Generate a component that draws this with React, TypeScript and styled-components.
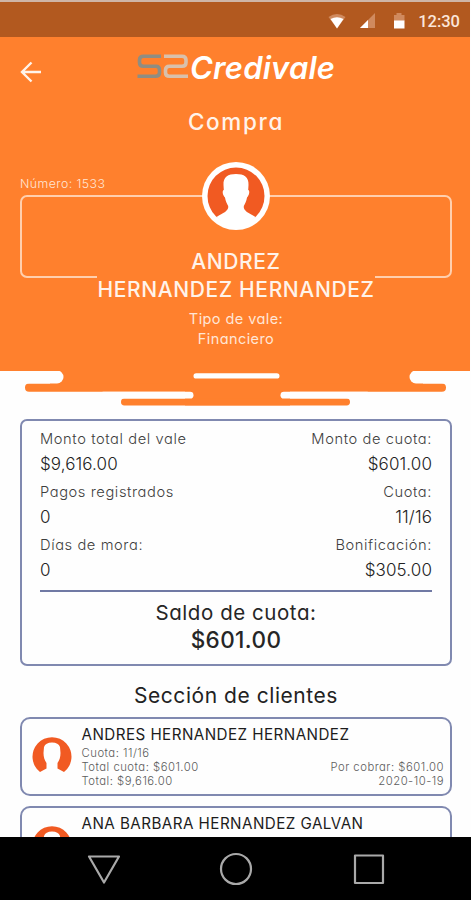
import React from "react";
import styled, { createGlobalStyle } from "styled-components";

const ORANGE = "#ff802d";
const FLAME = "#f15a22";
const NAVY = "#8089b0";

const GlobalStyle = createGlobalStyle`
  * { box-sizing: border-box; }
  body {
    margin: 0;
    background: #fff;
    font-family: "Inter", sans-serif;
    font-feature-settings: "cv11" 1;
  }
`;

const Screen = styled.div`
  display: flex;
  flex-direction: column;
  width: 471px;
  height: 900px;
  overflow: hidden;
  background: #fefefe;
`;

const StatusBar = styled.div`
  display: flex;
  flex: none;
  align-items: center;
  justify-content: flex-end;
  width: 470px;
  height: 37px;
  padding: 5px 10px 0 0;
  border-top: 2px solid #cfb5a6;
  background: #b2591f;
`;

const StatusIcons = styled.svg`
  display: block;
  margin-right: 10px;
`;

const Clock = styled.span`
  font: 500 16.5px/20px Roboto, sans-serif;
  color: #fbe6da;
`;

const Header = styled.header`
  flex: none;
  width: 470px;
  height: 334px;
  padding: 0 18px 0 20px;
  background: ${ORANGE};
`;

const TopBar = styled.div`
  display: grid;
  grid-template-columns: 117px 1fr;
  align-items: center;
  height: 66px;
`;

const BackIcon = styled.svg`
  display: block;
  margin-top: 3px;
`;

const Brand = styled.div`
  display: flex;
  align-items: flex-start;
`;

const BrandLogo = styled.svg`
  display: block;
`;

const BrandName = styled.span`
  margin-left: 1px;
  font-size: 31px;
  line-height: 38px;
  margin-top: -5px;
  font-weight: 600;
  font-style: italic;
  letter-spacing: 0.2px;
  color: #fff;
`;

const Title = styled.h1`
  margin: 3px 0 0;
  text-align: center;
  font-size: 22.5px;
  line-height: 31px;
  font-weight: 500;
  letter-spacing: 1.65px;
  color: #fff3ea;
`;

const VoucherNumber = styled.div`
  margin-top: 39px;
  height: 19px;
  font-size: 12.3px;
  line-height: 16px;
  font-weight: 300;
  letter-spacing: 0.45px;
  color: #ffe6d6;
`;

const HolderFrame = styled.section`
  display: flex;
  flex-direction: column;
  align-items: center;
  height: 83px;
  border: 2px solid #ffcfae;
  border-radius: 7px;
`;

const HolderAvatar = styled.svg`
  display: block;
  flex: none;
  margin-top: -35px;
`;

const HolderName = styled.div`
  flex: none;
  width: 278px;
  margin-top: 18px;
  background: ${ORANGE};
  text-align: center;
  white-space: nowrap;
  font-size: 21px;
  line-height: 28px;
  font-weight: 500;
  letter-spacing: 0.62px;
  color: #fff3ea;
`;

const VoucherType = styled.div`
  margin-top: 31px;
  text-align: center;
  font-size: 14.5px;
  line-height: 19.5px;
  font-weight: 400;
  letter-spacing: 0.42px;
  color: #ffe6d6;
`;

const Drips = styled.svg`
  display: block;
  flex: none;
`;

const Body = styled.main`
  display: flex;
  flex: 1;
  flex-direction: column;
  min-height: 0;
  overflow: hidden;
  padding: 13px 19px 0 20px;
`;

const Summary = styled.section`
  flex: none;
  height: 247px;
  padding: 5px 18px 0;
  border: 2px solid ${NAVY};
  border-radius: 7px;
`;

const Figures = styled.dl`
  display: grid;
  grid-template-columns: auto auto;
  justify-content: space-between;
  row-gap: 3px;
  margin: 0;
`;

const Figure = styled.div<{ $end?: boolean }>`
  text-align: ${(p) => (p.$end ? "right" : "left")};
`;

const FigureLabel = styled.dt`
  font-size: 14.7px;
  line-height: 26px;
  font-weight: 300;
  letter-spacing: 0.58px;
  color: #3e3e3e;
`;

const FigureValue = styled.dd`
  margin: 0;
  font-size: 17px;
  line-height: 24px;
  font-weight: 300;
  letter-spacing: 0.1px;
  color: #222;
`;

const Rule = styled.hr`
  height: 2px;
  margin: 8px 0 7px;
  border: 0;
  background: #7079a4;
`;

const BalanceLabel = styled.div`
  text-align: center;
  font-size: 20.5px;
  line-height: 27px;
  letter-spacing: 0.55px;
  color: #262626;
`;

const BalanceValue = styled.div`
  text-align: center;
  font-size: 22.5px;
  line-height: 27px;
  font-weight: 500;
  letter-spacing: 0.4px;
  color: #262626;
`;

const SectionTitle = styled.h2`
  margin: 16px 0 7px;
  text-align: center;
  font-size: 21px;
  line-height: 28px;
  font-weight: 400;
  letter-spacing: 0.55px;
  color: #222;
`;

const ClientCard = styled.article`
  display: grid;
  grid-template-columns: 50px 1fr;
  flex: none;
  height: 79px;
  margin-bottom: 10px;
  padding: 6px 6px 0 9.5px;
  border: 2px solid ${NAVY};
  border-radius: 10px;
`;

const ClientIcon = styled.svg`
  display: block;
  margin-top: 12px;
`;

const ClientName = styled.h3`
  margin: 0 0 2px;
  white-space: nowrap;
  font-size: 15.2px;
  line-height: 20px;
  font-weight: 400;
  letter-spacing: 0.44px;
  color: #1c1c1c;
`;

const ClientDetails = styled.div`
  display: flex;
  align-items: flex-end;
  justify-content: space-between;
  font-size: 11.3px;
  line-height: 13.8px;
  font-weight: 300;
  letter-spacing: 0.5px;
  color: #5c5c5c;
`;

const ClientDue = styled.div`
  text-align: right;
`;

const NavBar = styled.nav`
  display: flex;
  flex: none;
  align-items: center;
  justify-content: space-between;
  height: 63px;
  padding: 0 84.5px 0 86px;
  background: #000;
`;

const NavIcon = styled.svg`
  display: block;
  fill: none;
  stroke: #a9a9a9;
  stroke-width: 2.2;
  stroke-linejoin: round;
`;

const figures = [
  ["Monto total del vale", "$9,616.00", "Monto de cuota:", "$601.00"],
  ["Pagos registrados", "0", "Cuota:", "11/16"],
  ["Días de mora:", "0", "Bonificación:", "$305.00"],
];

const clients = [
  {
    name: "ANDRES HERNANDEZ HERNANDEZ",
    details: ["Cuota: 11/16", "Total cuota: $601.00", "Total: $9,616.00"],
    due: ["Por cobrar: $601.00", "2020-10-19"],
  },
  { name: "ANA BARBARA HERNANDEZ GALVAN", details: [], due: [] },
];

/* Head and shoulders, drawn in a 68-unit circle. */
const SILHOUETTE =
  "M34 12C26 12 21 15 21.500 23L21.800 28C20 28.500 20.500 33 23 35.500C23.500 39 25 42 26.200 44C27 49 21 51 14.500 55C20 61.500 27 64 34 64S48 61.500 53.500 55C47 51 41 49 41.800 44C43 42 44.500 39 45 35.500C47.500 33 48 28.500 46.200 28L46.500 23C47 15 42 12 34 12Z";

export default function App() {
  return (
    <>
      <GlobalStyle />
      <Screen>
        <StatusBar>
          <StatusIcons width="80" height="18" viewBox="0 0 80 18">
            <path d="M0.500 4Q9 -2 17.500 4L9 15.500Z" fill="#d08a5e" />
            <path d="M2.500 6Q9 2.500 15.500 6L9 15.500Z" fill="#fff" />
            <path d="M32 15H47V0Z" fill="#d08a5e" />
            <path d="M32 15H40V7Z" fill="#fff" />
            <path d="M66 2H68.500V0H73.500V2H76.500V8H66Z" fill="#d08a5e" />
            <path d="M66 7.500H76.500V15.500H66Z" fill="#fff" />
          </StatusIcons>
          <Clock>12:30</Clock>
        </StatusBar>

        <Header>
          <TopBar>
            <BackIcon width="22" height="22" viewBox="0 0 22 22" fill="none" stroke="#fff3ea" strokeWidth="2.4">
              <path d="M21 11H2M11.500 1.500L2 11L11.500 20.500" />
            </BackIcon>
            <Brand>
              <BrandLogo width="52" height="25" viewBox="0 0 52 25" fill="none" strokeWidth="3.6">
                <path
                  d="M24 2.200H6.500Q2.500 2.200 2.500 6V8.500Q2.500 12.200 6.500 12.200H19Q22.500 12.200 22.500 16V18.500Q22.500 22.300 18.500 22.300H0.500"
                  stroke="#8f8d82"
                />
                <path
                  d="M27 2.200H45Q49 2.200 49 6V8.500Q49 12.200 45 12.200H32.500Q28.500 12.200 28.500 16V18.500Q28.500 22.300 32.500 22.300H51"
                  stroke="#d9c0ab"
                />
              </BrandLogo>
              <BrandName>Credivale</BrandName>
            </Brand>
          </TopBar>
          <Title>Compra</Title>
          <VoucherNumber>Número: 1533</VoucherNumber>
          <HolderFrame>
            <HolderAvatar width="68" height="68" viewBox="0 0 68 68">
              <circle cx="34" cy="34" r="34" fill="#fff" />
              <circle cx="34" cy="34" r="28.500" fill={FLAME} />
              <path d={SILHOUETTE} fill="#fff" />
            </HolderAvatar>
            <HolderName>
              ANDREZ
              <br />
              HERNANDEZ HERNANDEZ
            </HolderName>
          </HolderFrame>
          <VoucherType>
            Tipo de vale:
            <br />
            Financiero
          </VoucherType>
        </Header>
        <Drips width="471" height="35" viewBox="0 0 471 35">
          <rect x="50" y="-8" width="373" height="22" fill={ORANGE} />
          <rect x="25" y="12.500" width="421" height="8.300" rx="4.100" fill={ORANGE} />
          <rect x="185" y="14" width="105" height="20.400" fill={ORANGE} />
          <rect x="121" y="27.600" width="229" height="6.800" rx="3.400" fill={ORANGE} />
          <rect x="-10" y="-0.500" width="73.500" height="13" rx="6.500" fill="#fefefe" />
          <rect x="409.500" y="-0.500" width="80" height="13" rx="6.500" fill="#fefefe" />
          <rect x="193.500" y="2.200" width="86" height="5.400" rx="2.700" fill="#fefefe" />
          <rect x="100" y="20.800" width="93.500" height="6.800" rx="3.400" fill="#fefefe" />
          <rect x="280.500" y="20.800" width="90" height="6.800" rx="3.400" fill="#fefefe" />
        </Drips>

        <Body>
          <Summary>
            <Figures>
              {figures.map(([label, value, endLabel, endValue]) => (
                <React.Fragment key={label}>
                  <Figure>
                    <FigureLabel>{label}</FigureLabel>
                    <FigureValue>{value}</FigureValue>
                  </Figure>
                  <Figure $end>
                    <FigureLabel>{endLabel}</FigureLabel>
                    <FigureValue>{endValue}</FigureValue>
                  </Figure>
                </React.Fragment>
              ))}
            </Figures>
            <Rule />
            <BalanceLabel>Saldo de cuota:</BalanceLabel>
            <BalanceValue>$601.00</BalanceValue>
          </Summary>

          <SectionTitle>Sección de clientes</SectionTitle>
          {clients.map((client) => (
            <ClientCard key={client.name}>
              <ClientIcon width="40" height="38" viewBox="0 0 40 38">
                <path
                  d="M8 35A19.500 19.500 0 1 1 32 35L25.500 31.500V26C27.500 23 28.500 20 28.500 16L28 10Q26.500 5.500 20 5.500T12 10L11.500 16C11.500 20 12.500 23 14.500 26V31.500Z"
                  fill={FLAME}
                />
              </ClientIcon>
              <div>
                <ClientName>{client.name}</ClientName>
                <ClientDetails>
                  <div>
                    {client.details.map((line) => (
                      <div key={line}>{line}</div>
                    ))}
                  </div>
                  <ClientDue>
                    {client.due.map((line) => (
                      <div key={line}>{line}</div>
                    ))}
                  </ClientDue>
                </ClientDetails>
              </div>
            </ClientCard>
          ))}
        </Body>

        <NavBar>
          <NavIcon width="36" height="34" viewBox="0 0 36 34">
            <path d="M3 4.500H33L18 30.500Z" />
          </NavIcon>
          <NavIcon width="36" height="34" viewBox="0 0 36 34">
            <circle cx="18" cy="17" r="15" />
          </NavIcon>
          <NavIcon width="36" height="34" viewBox="0 0 36 34">
            <rect x="4" y="3.500" width="28" height="27.500" />
          </NavIcon>
        </NavBar>
      </Screen>
    </>
  );
}
